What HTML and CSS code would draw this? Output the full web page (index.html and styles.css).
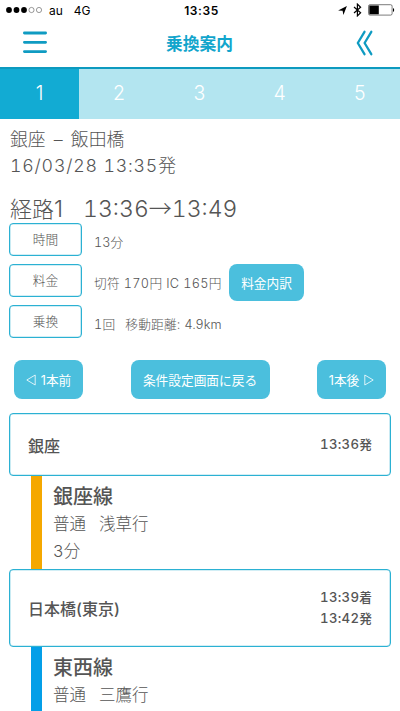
FILE: index.html
```html
<!DOCTYPE html>
<html lang="ja">
<head>
    <meta charset="UTF-8">
    <meta name="viewport" content="width=device-width, initial-scale=1.0">
    <title>乗換案内</title>
    <link rel="stylesheet" href="styles.css">
</head>
<body>
    <div class="status-bar">
        <div class="carrier">
            <svg class="signal" width="37" height="8" viewBox="0 0 37 8">
                <g fill="#000">
                    <circle cx="3" cy="4" r="2.9"/>
                    <circle cx="10.5" cy="4" r="2.9"/>
                    <circle cx="18" cy="4" r="2.9"/>
                </g>
                <g fill="none" stroke="#555" stroke-width="0.6">
                    <circle cx="25.5" cy="4" r="2.6"/>
                    <circle cx="33" cy="4" r="2.6"/>
                </g>
            </svg>
            <span class="carrier-name">au</span>
            <span class="network">4G</span>
        </div>
        <div class="clock">13:35</div>
        <div class="indicators">
            <svg width="9" height="9" viewBox="0 0 9 9"><path d="M8.9 0.1L5.4 8.9L4.6 4.8L0.1 4.4Z" fill="#000"/></svg>
            <svg class="bluetooth" width="9" height="14" viewBox="0 0 9 14"><path d="M1 4L7.6 9.8L4.4 12.9V1.1L7.6 4.2L1 10" fill="none" stroke="#000" stroke-width="1.2"/></svg>
            <svg class="battery" width="27" height="12" viewBox="0 0 27 12">
                <rect x="0.5" y="0.7" width="23.6" height="10.4" rx="1.5" fill="none" stroke="#444" stroke-width="0.7"/>
                <rect x="1.3" y="1.5" width="9.5" height="8.8" fill="#000"/>
                <path d="M25 4V8C26.6 7.5 26.6 4.5 25 4Z" fill="#000"/>
            </svg>
        </div>
    </div>

    <header class="header">
        <svg width="24" height="23" viewBox="0 0 24 23"><path d="M1.4 2H22.6M1.4 11.3H22.6M1.4 20.6H22.6" stroke="#0f9bc2" stroke-width="2.8" stroke-linecap="round"/></svg>
        <h1>乗換案内</h1>
        <svg width="17" height="26" viewBox="0 0 17 26"><path d="M8.5 1.8L1.8 13L8.5 24.2M15.3 1.8L8.6 13L15.3 24.2" fill="none" stroke="#0f9bc2" stroke-width="2.3" stroke-linecap="round" stroke-linejoin="round"/></svg>
    </header>

    <nav class="tabs">
        <div class="tab active">1</div>
        <div class="tab">2</div>
        <div class="tab">3</div>
        <div class="tab">4</div>
        <div class="tab">5</div>
    </nav>

    <div class="summary">
        <p class="stations">銀座 – 飯田橋</p>
        <p class="date"><span class="num">16/03/28 13:35</span>発</p>
        <h2>経路<span class="route-no">1</span><span class="num">13:36</span><span class="arrow">→</span><span class="num">13:49</span></h2>
    </div>

    <div class="details">
        <div class="detail">
            <div class="label">時間</div>
            <div class="value"><span class="num">13</span>分</div>
        </div>
        <div class="detail">
            <div class="label">料金</div>
            <div class="value fare">切符 <span class="num">170</span>円 IC <span class="num">165</span>円</div>
            <button class="button fare-button">料金内訳</button>
        </div>
        <div class="detail">
            <div class="label">乗換</div>
            <div class="value distance"><span class="num">1</span>回<span class="gap"></span>移動距離: 4.9km</div>
        </div>
    </div>

    <div class="actions">
        <button class="button prev">
            <svg width="10" height="12" viewBox="0 0 10 12"><path d="M9.2 1V11L0.8 6Z" fill="none" stroke="#fff" stroke-width="0.8"/></svg>
            1本前
        </button>
        <button class="button back">条件設定画面に戻る</button>
        <button class="button next">
            1本後
            <svg width="10" height="12" viewBox="0 0 10 12"><path d="M0.8 1V11L9.2 6Z" fill="none" stroke="#fff" stroke-width="0.8"/></svg>
        </button>
    </div>

    <div class="route">
        <div class="station">
            <div class="station-name">銀座</div>
            <div class="times"><div>13:36<b>発</b></div></div>
        </div>
        <div class="leg ginza">
            <h3>銀座線</h3>
            <p>普通<span class="gap"></span>浅草行</p>
            <p><span class="num">3</span>分</p>
        </div>
        <div class="station transfer">
            <div class="station-name">日本橋(東京)</div>
            <div class="times"><div>13:39<b>着</b></div><div>13:42<b>発</b></div></div>
        </div>
        <div class="leg tozai">
            <h3>東西線</h3>
            <p>普通<span class="gap"></span>三鷹行</p>
        </div>
    </div>
</body>
</html>
```
FILE: styles.css
```css
* {
    box-sizing: border-box;
}
body {
    margin: 0;
    height: 711px;
    overflow: hidden;
    background-color: #fff;
    color: #555;
    font-family: Inter, "Noto Sans CJK JP", sans-serif;
    font-weight: 300;
}
h1, h2, h3, p {
    margin: 0;
}
svg {
    display: block;
    flex: none;
}
.status-bar {
    display: grid;
    grid-template-columns: 1fr auto 1fr;
    align-items: center;
    height: 20px;
    padding: 0 5px 0 6px;
    color: #000;
    font-size: 12px;
    font-weight: 400;
}
.carrier {
    display: flex;
    align-items: center;
}
.carrier-name {
    margin-left: 6px;
}
.network {
    margin-left: 11px;
}
.clock {
    margin-right: -2px;
    font-weight: 600;
    letter-spacing: 0.6px;
}
.indicators {
    display: flex;
    align-items: center;
    justify-content: flex-end;
}
.bluetooth {
    margin: 0 6px;
}
.header {
    display: flex;
    align-items: center;
    justify-content: space-between;
    height: 49px;
    padding: 0 27px 2px 23px;
    border-bottom: 2px solid #0c9abf;
}
.header h1 {
    margin: 2px 4px 0 0;
    color: #12a5cc;
    font-size: 16.8px;
    font-weight: 700;
    line-height: 24px;
}
.tabs {
    display: flex;
    height: 50px;
    background-color: #b3e5f0;
}
.tab {
    width: 80.3px;
    color: #fff;
    font-size: 19.5px;
    line-height: 48px;
    text-align: center;
}
.tab.active {
    width: 79px;
    background-color: #12abd3;
}
.summary {
    padding: 8px 10px 0;
}
.summary p {
    height: 26px;
    font-size: 17.8px;
    line-height: 26px;
}
.stations {
    word-spacing: 3.2px;
}
.num {
    font-variant-numeric: tabular-nums;
}
.date .num {
    letter-spacing: 0.8px;
}
.summary h2 {
    height: 31px;
    margin-top: 13px;
    font-size: 22px;
    font-weight: 300;
    line-height: 31px;
    white-space: nowrap;
}
.route-no {
    margin-right: 20px;
}
.summary h2 span {
    font-size: 23px;
}
.arrow {
    font-family: "Noto Sans CJK JP", sans-serif;
}
.details {
    display: grid;
    gap: 8px;
    padding: 0 9px;
}
.detail {
    display: flex;
    height: 33px;
}
.label {
    width: 73px;
    height: 33px;
    border: 1.6px solid #2bb1d3;
    box-shadow: inset 0 0 0 0.6px #a5ddeb;
    border-radius: 4px;
    font-size: 12.7px;
    line-height: 31px;
    text-align: center;
}
.value {
    margin-left: 12px;
    font-size: 12.7px;
    line-height: 40px;
    white-space: nowrap;
}
.gap {
    display: inline-block;
    width: 10px;
}
.button {
    display: flex;
    align-items: center;
    justify-content: center;
    height: 39px;
    padding: 0;
    border: none;
    border-radius: 8px;
    background-color: #4bbfdd;
    color: #fff;
    font-family: inherit;
    font-size: 12.7px;
    font-weight: 400;
    white-space: nowrap;
}
.fare {
    width: 134px;
    letter-spacing: 0.3px;
}
.distance {
    letter-spacing: 0.2px;
}
.fare-button {
    flex: none;
    width: 75px;
    height: 37px;
    margin-left: 1px;
}
.actions {
    display: flex;
    justify-content: space-between;
    padding: 22px 14px 0;
}
.prev, .next {
    width: 69px;
    gap: 5px;
}
.back {
    width: 139px;
}
.route {
    margin-top: 14px;
    padding: 0 9px;
}
.station {
    display: flex;
    align-items: center;
    justify-content: space-between;
    height: 63px;
    padding: 0 18px;
    border: 1.6px solid #2bb1d3;
    box-shadow: inset 0 0 0 0.6px #a5ddeb;
    border-radius: 4px;
}
.station.transfer {
    height: 78px;
}
.station-name {
    font-size: 16px;
    font-weight: 500;
}
.times {
    font-size: 13.2px;
    font-weight: 500;
    font-variant-numeric: tabular-nums;
    line-height: 20px;
    letter-spacing: 0.3px;
}
.times b {
    font-size: 12.7px;
    font-weight: 500;
    letter-spacing: 0;
}
.leg {
    height: 93px;
    margin-left: 22px;
    padding: 7px 0 0 11px;
    border-left: 11px solid #f5a800;
}
.leg.tozai {
    border-color: #049fe8;
}
.leg h3 {
    height: 28px;
    font-size: 20px;
    font-weight: 500;
    line-height: 28px;
}
.leg p {
    height: 27px;
    font-size: 16.5px;
    line-height: 27px;
}
.leg .gap {
    width: 13px;
}
```
